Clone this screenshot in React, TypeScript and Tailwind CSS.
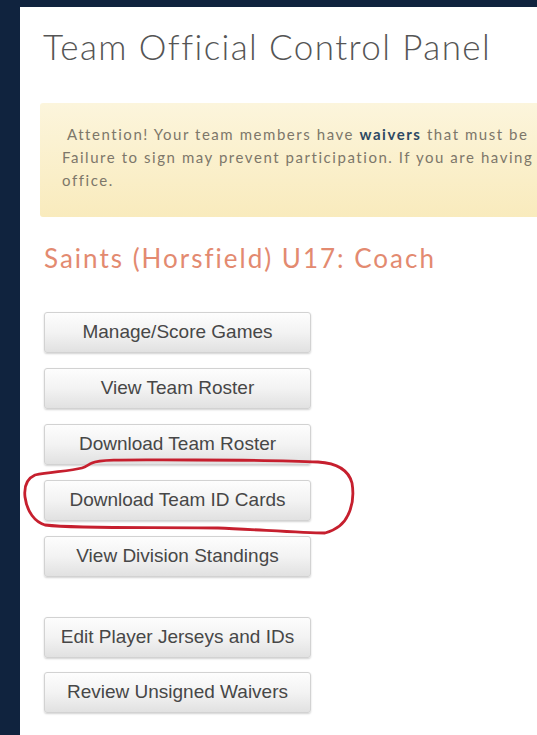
import React from "react";

const actions = [
  "Manage/Score Games",
  "View Team Roster",
  "Download Team Roster",
  "Download Team ID Cards",
  "View Division Standings",
];

const extras = ["Edit Player Jerseys and IDs", "Review Unsigned Waivers"];

function ActionButton({ label }: { label: string }) {
  return (
    <button
      type="button"
      className="h-[41px] w-[267px] rounded-[3px] border border-[#d2d2d2] bg-gradient-to-b from-[#fdfdfd] via-[#f3f3f3] to-[#e1e1e1] text-center text-[19px] text-[#474747] shadow-[0_1px_2px_rgba(0,0,0,0.18)]"
      style={{ fontFamily: '"Liberation Sans", Arial, sans-serif' }}
    >
      {label}
    </button>
  );
}

// Hand-drawn marker loop around the ID cards button
function MarkerLoop() {
  return (
    <svg
      className="pointer-events-none absolute left-[-24px] top-[-25px]"
      width="345"
      height="90"
      viewBox="0 0 345 90"
      fill="none"
    >
      <path
        d="M72 8 C 80 4, 110 5, 175 5 C 240 5, 280 6, 298 7 C 315 8, 328 13, 332 28 C 334 40, 333 50, 328 60 C 324 69, 316 75, 305 78 C 280 78, 230 74, 198 73 C 130 72, 60 74, 25 70 C 15 67, 7 57, 5 42 C 4 33, 6 24, 15 20 C 30 17, 50 16, 62 13 C 66 12, 69 9, 72 8"
        stroke="#c61f2e"
        strokeWidth="2.8"
        strokeLinecap="round"
        strokeLinejoin="round"
      />
    </svg>
  );
}

export default function App() {
  return (
    <div className="min-h-[735px] overflow-hidden bg-[#10233e] pl-[20px] pt-[7px]">
      <div
        className="min-h-[728px] bg-white pl-[20px] pt-[22px]"
        style={{ fontFamily: 'Lato, "Open Sans", sans-serif' }}
      >
        <h1 className="ml-[3px] whitespace-nowrap text-[35px] font-light leading-none tracking-[1.4px] text-[#555555]">
          Team Official Control Panel
        </h1>

        <div className="mt-[39px] w-[620px] rounded-l-[3px] bg-gradient-to-b from-[#fcf5dc] to-[#f9ebbd] pb-[25px] pl-[22px] pt-[20px] text-[15px] leading-[23px] tracking-[1.55px] text-[#7d776a]">
          <p className="whitespace-nowrap">
            &nbsp;Attention! Your team members have{" "}
            <span className="font-bold text-[#2e4963]">waivers</span> that must be
            <br />
            Failure to sign may prevent participation. If you are having
            <br />
            office.
          </p>
        </div>

        <h2 className="ml-[4px] mt-[28px] whitespace-nowrap text-[26px] leading-none tracking-[2px] text-[#e38a70]">
          Saints (Horsfield) U17: Coach
        </h2>

        <div className="mt-[41px] flex flex-col gap-[15px] pl-[4px]">
          {actions.map((label) => (
            <div key={label} className="relative w-[267px]">
              {label === "Download Team ID Cards" && <MarkerLoop />}
              <ActionButton label={label} />
            </div>
          ))}
        </div>

        <div className="mt-[40px] flex flex-col gap-[14px] pb-[20px] pl-[4px]">
          {extras.map((label) => (
            <ActionButton key={label} label={label} />
          ))}
        </div>
      </div>
    </div>
  );
}
